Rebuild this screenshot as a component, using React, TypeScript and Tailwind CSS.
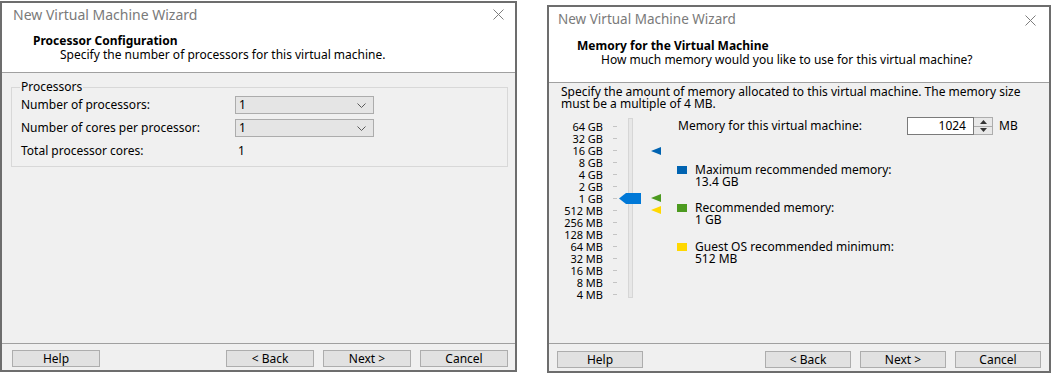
import React from 'react'

const memoryLabels = [
  '64 GB', '32 GB', '16 GB', '8 GB', '4 GB', '2 GB', '1 GB',
  '512 MB', '256 MB', '128 MB', '64 MB', '32 MB', '16 MB', '8 MB', '4 MB',
]

function CloseIcon() {
  return (
    <svg width="11" height="11" viewBox="0 0 11 11" className="shrink-0">
      <path d="M0.5 0.5 L10.5 10.5 M10.5 0.5 L0.5 10.5" stroke="#7d7d7d" strokeWidth="1" fill="none" />
    </svg>
  )
}

function WinButton({ label, w }: { label: string; w: string }) {
  return (
    <button
      className={`${w} flex h-[17px] items-center justify-center border border-[#adadad] bg-[#e1e1e1] text-[12px] leading-none text-black`}
    >
      {label}
    </button>
  )
}

function Combo({ value }: { value: string }) {
  return (
    <div className="flex h-[18px] w-[139px] items-center justify-between border border-[#acacac] bg-[#e5e5e5] pl-[3px] pr-[7px]">
      <span className="text-[12px] leading-none">{value}</span>
      <svg width="9" height="5" viewBox="0 0 9 5">
        <path d="M0.5 0.5 L4.5 4.5 L8.5 0.5" stroke="#5a5a5a" strokeWidth="1" fill="none" />
      </svg>
    </div>
  )
}

function ProcessorWindow() {
  return (
    <div className="mt-[1px] flex h-[371px] w-[517px] shrink-0 flex-col border-2 border-[#6d6d6d] bg-[#f0f0f0]">
      {/* header */}
      <div className="h-[70px] shrink-0 border-b border-[#a0a0a0] bg-white">
        <div className="flex h-[22px] items-center justify-between pl-[11px] pr-[11px]">
          <span className="pt-[1px] text-[14px] leading-none text-[#7a7a7a]">New Virtual Machine Wizard</span>
          <CloseIcon />
        </div>
        <div className="mt-[9px] pl-[31px] text-[12px] font-bold leading-[14px]">Processor Configuration</div>
        <div className="pl-[58px] text-[12px] leading-[14px]">
          Specify the number of processors for this virtual machine.
        </div>
      </div>

      {/* body */}
      <div className="flex-1">
        <fieldset className="ml-[9px] mr-[7px] mt-[7px] border border-[#d8d8d8] px-[9px] pb-[6px]">
          <legend className="-ml-[1px] px-[1px] text-[12px] leading-[14px]">Processors</legend>
          <div className="mt-[2px] flex flex-col gap-[5px] text-[12px]">
            <div className="flex h-[18px] items-center">
              <span className="w-[214px] leading-none">Number of processors:</span>
              <Combo value="1" />
            </div>
            <div className="flex h-[18px] items-center">
              <span className="w-[214px] leading-none">Number of cores per processor:</span>
              <Combo value="1" />
            </div>
            <div className="flex h-[18px] items-center">
              <span className="w-[217px] leading-none">Total processor cores:</span>
              <span className="leading-none">1</span>
            </div>
          </div>
        </fieldset>
      </div>

      {/* footer */}
      <div className="flex h-[27px] shrink-0 items-start justify-between border-t border-[#a0a0a0] pl-[10px] pr-[7px] pt-[6px]">
        <WinButton label="Help" w="w-[88px]" />
        <div className="flex gap-[9px]">
          <WinButton label="< Back" w="w-[88px]" />
          <WinButton label="Next >" w="w-[88px]" />
          <WinButton label="Cancel" w="w-[88px]" />
        </div>
      </div>
    </div>
  )
}

function Marker({ color, top }: { color: string; top: string }) {
  return (
    <svg width="10" height="8" viewBox="0 0 10 8" className={`absolute left-[102px] ${top}`}>
      <polygon points="0,4 10,0 10,8" fill={color} />
    </svg>
  )
}

function LegendItem({ color, title, value, mt }: { color: string; title: string; value: string; mt: string }) {
  return (
    <div className={`${mt} flex items-start gap-[8px]`}>
      <div className={`mt-[2px] h-[8px] w-[10px] ${color}`} />
      <div className="text-[12px] leading-[12px]">
        <div>{title}</div>
        <div>{value}</div>
      </div>
    </div>
  )
}

function MemoryWindow() {
  return (
    <div className="ml-[30px] mt-[5px] flex h-[368px] w-[504px] shrink-0 flex-col border-2 border-[#6d6d6d] bg-[#f0f0f0]">
      {/* header */}
      <div className="h-[76px] shrink-0 border-b border-[#a0a0a0] bg-white">
        <div className="flex h-[26px] items-center justify-between pl-[9px] pr-[13px]">
          <span className="text-[13.5px] leading-none text-[#7a7a7a]">New Virtual Machine Wizard</span>
          <CloseIcon />
        </div>
        <div className="mt-[6px] pl-[28px] text-[12px] font-bold leading-[14px]">Memory for the Virtual Machine</div>
        <div className="pl-[52px] text-[12px] leading-[14px]">
          How much memory would you like to use for this virtual machine?
        </div>
      </div>

      {/* body */}
      <div className="flex-1">
        <div className="pl-[12px] pt-[3px] text-[12px] leading-[12px]">
          <div>Specify the amount of memory allocated to this virtual machine. The memory size</div>
          <div>must be a multiple of 4 MB.</div>
        </div>

        <div className="relative mt-[7px] flex items-start">
          {/* slider */}
          <div className="ml-[14px] mt-[3px] flex w-[40px] flex-col items-end text-[11px]">
            {memoryLabels.map((l) => (
              <div key={l} className="flex h-[12px] items-center leading-none">{l}</div>
            ))}
          </div>
          <div className="ml-[10px] mt-[3px] flex w-[4px] flex-col">
            {memoryLabels.map((l) => (
              <div key={l} className="flex h-[12px] items-center">
                <div className="h-[1px] w-[4px] bg-[#c4c4c4]" />
              </div>
            ))}
          </div>
          <div className="ml-[11px] mt-[1px] h-[180px] w-[5px] border border-[#d6d6d6] bg-[#e7e7e7]" />

          <svg width="22" height="11" viewBox="0 0 22 11" className="absolute left-[70px] top-[76px]">
            <polygon points="0,5.5 7,0 22,0 22,11 7,11" fill="#0078d7" />
          </svg>
          <Marker color="#0063b1" top="top-[30px]" />
          <Marker color="#4c9a1f" top="top-[77px]" />
          <Marker color="#ffd800" top="top-[89px]" />

          {/* right side */}
          <div className="ml-[44px] flex flex-col">
            <div className="flex h-[18px] items-center text-[12px]">
              <span className="w-[230px] pl-[1px] leading-none">Memory for this virtual machine:</span>
              <div className="flex h-[18px]">
                <div className="flex w-[67px] items-center justify-end border border-[#7a7a7a] bg-white pr-[7px] leading-none">
                  1024
                </div>
                <div className="flex w-[19px] flex-col border border-l-0 border-[#adadad] bg-[#e8e8e8]">
                  <div className="flex flex-1 items-center justify-center border-b border-[#adadad]">
                    <svg width="7" height="4" viewBox="0 0 7 4">
                      <polygon points="0,4 3.5,0 7,4" fill="#333" />
                    </svg>
                  </div>
                  <div className="flex flex-1 items-center justify-center">
                    <svg width="7" height="4" viewBox="0 0 7 4">
                      <polygon points="0,0 7,0 3.5,4" fill="#333" />
                    </svg>
                  </div>
                </div>
              </div>
              <span className="ml-[6px] leading-none">MB</span>
            </div>

            <LegendItem color="bg-[#0063b1]" title="Maximum recommended memory:" value="13.4 GB" mt="mt-[29px]" />
            <LegendItem color="bg-[#4c9a1f]" title="Recommended memory:" value="1 GB" mt="mt-[14px]" />
            <LegendItem color="bg-[#ffd800]" title="Guest OS recommended minimum:" value="512 MB" mt="mt-[15px]" />
          </div>
        </div>
      </div>

      {/* footer */}
      <div className="flex h-[28px] shrink-0 items-start justify-between border-t border-[#a0a0a0] pl-[8px] pr-[8px] pt-[7px]">
        <WinButton label="Help" w="w-[86px]" />
        <div className="flex gap-[9px]">
          <WinButton label="< Back" w="w-[86px]" />
          <WinButton label="Next >" w="w-[86px]" />
          <WinButton label="Cancel" w="w-[86px]" />
        </div>
      </div>
    </div>
  )
}

export default function App() {
  return (
    <div className="flex h-[377px] w-[1053px] items-start bg-white font-['Noto_Sans','Liberation_Sans',sans-serif] text-black">
      <ProcessorWindow />
      <MemoryWindow />
    </div>
  )
}
